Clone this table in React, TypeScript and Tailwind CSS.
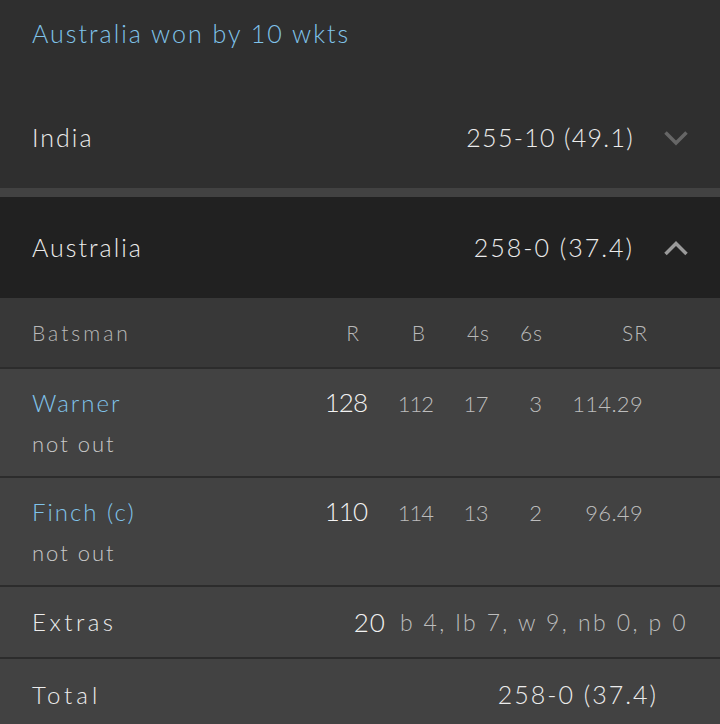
import { ReactNode } from "react";

type Batter = {
    name: string;
    dismissal: string;
    runs: string;
    balls: string;
    fours: string;
    sixes: string;
    sr: string;
};

const batters: Batter[] = [
    { name: "Warner", dismissal: "not out", runs: "128", balls: "112", fours: "17", sixes: "3", sr: "114.29" },
    { name: "Finch (c)", dismissal: "not out", runs: "110", balls: "114", fours: "13", sixes: "2", sr: "96.49" },
];

function Chevron({ up, color }: { up?: boolean; color: string }) {
    return (
        <svg width="24" height="16" viewBox="0 0 24 16" className="shrink-0">
            <path
                d={up ? "M1.5 14 L12 3.5 L22.5 14" : "M1.5 2.5 L12 13 L22.5 2.5"}
                fill="none"
                stroke={color}
                strokeWidth="3.5"
            />
        </svg>
    );
}

function InningsHeader({ team, score, open }: { team: string; score: string; open?: boolean }) {
    return (
        <div
            className={`flex h-[101px] items-center pl-8 pr-8 text-[25px] text-[#ececec] ${open ? "bg-[#212121]" : "bg-[#2f2f2f]"}`}
        >
            <span className="flex-1 tracking-[2px]">{team}</span>
            <span className={`mr-[30px] ${open ? "tracking-[2px]" : "tracking-[1.3px]"}`}>{score}</span>
            <Chevron up={open} color={open ? "#9a9a9a" : "#666666"} />
        </div>
    );
}

function Divider() {
    return <div className="h-[2px] bg-[#2c2c2c]" />;
}

function StatCells({ children }: { children: ReactNode }) {
    return <div className="flex items-baseline">{children}</div>;
}

export default function App() {
    return (
        <div
            className="h-[724px] w-full overflow-hidden bg-[#2f2f2f]"
            style={{ fontFamily: "Lato, 'Noto Sans', sans-serif", fontWeight: 300 }}
        >
            <div className="flex h-[70px] items-center px-8 pb-[2px] text-[25px] tracking-[2px] text-[#80c3ea]">
                Australia won by 10 wkts
            </div>
            <div className="h-[17px]" />
            <InningsHeader team="India" score="255-10 (49.1)" />
            <div className="h-[9px] bg-[#424242]" />
            <InningsHeader team="Australia" score="258-0 (37.4)" open />

            <div className="flex h-[69px] items-center bg-[#383838] pl-8 text-[21px] text-[#b8b8b8]">
                <span className="flex-1 tracking-[3px]">Batsman</span>
                <div className="flex items-center">
                    <span className="w-[67px] pr-[8px] text-right">R</span>
                    <span className="w-[66px] pr-[8px] text-right">B</span>
                    <span className="w-[55px] translate-x-[2px] text-right tracking-[1px]">4s</span>
                    <span className="w-[54px] translate-x-[1px] text-right tracking-[1px]">6s</span>
                    <span className="w-[101px] translate-x-[5px] text-right tracking-[1px]">SR</span>
                </div>
                <span className="w-[77px]" />
            </div>
            <Divider />

            {batters.map((b) => (
                <div key={b.name}>
                    <div className="flex h-[107px] flex-col bg-[#424242] pl-8 pt-[14px]">
                        <div className="flex items-baseline">
                            <span className="flex-1 text-[24px] tracking-[2px] text-[#80c3ea]">{b.name}</span>
                            <StatCells>
                                <span className="w-[67px] text-right text-[26px] tracking-[-1px] text-[#f2f2f2]">{b.runs}</span>
                                <span className="w-[66px] text-right text-[22px] tracking-[-1px] text-[#bdbdbd]">{b.balls}</span>
                                <span className="w-[55px] text-right text-[22px] tracking-[-0.5px] text-[#bdbdbd]">{b.fours}</span>
                                <span className="w-[54px] text-right text-[22px] text-[#bdbdbd]">{b.sixes}</span>
                                <span className="w-[101px] text-right text-[22px] tracking-[0.3px] text-[#bdbdbd]">{b.sr}</span>
                            </StatCells>
                            <span className="w-[77px]" />
                        </div>
                        <span className="mt-[5px] text-[22px] tracking-[2px] text-[#c8c8c8]">{b.dismissal}</span>
                    </div>
                    <Divider />
                </div>
            ))}

            <div className="flex h-[70px] items-center bg-[#424242] pl-8 pr-8">
                <span className="flex-1 text-[24px] tracking-[3.5px] text-[#ececec]">Extras</span>
                <span className="text-[26px] tracking-[1px] text-[#f2f2f2]">20</span>
                <span className="ml-[14px] text-[23px] tracking-[2.4px] text-[#bdbdbd]">b 4, lb 7, w 9, nb 0, p 0</span>
            </div>
            <Divider />
            <div className="flex h-[72px] items-center bg-[#424242] pl-8 pr-[62px]">
                <span className="flex-1 text-[24px] tracking-[4px] text-[#ececec]">Total</span>
                <span className="text-[25px] tracking-[2px] text-[#ececec]">258-0 (37.4)</span>
            </div>
        </div>
    );
}
